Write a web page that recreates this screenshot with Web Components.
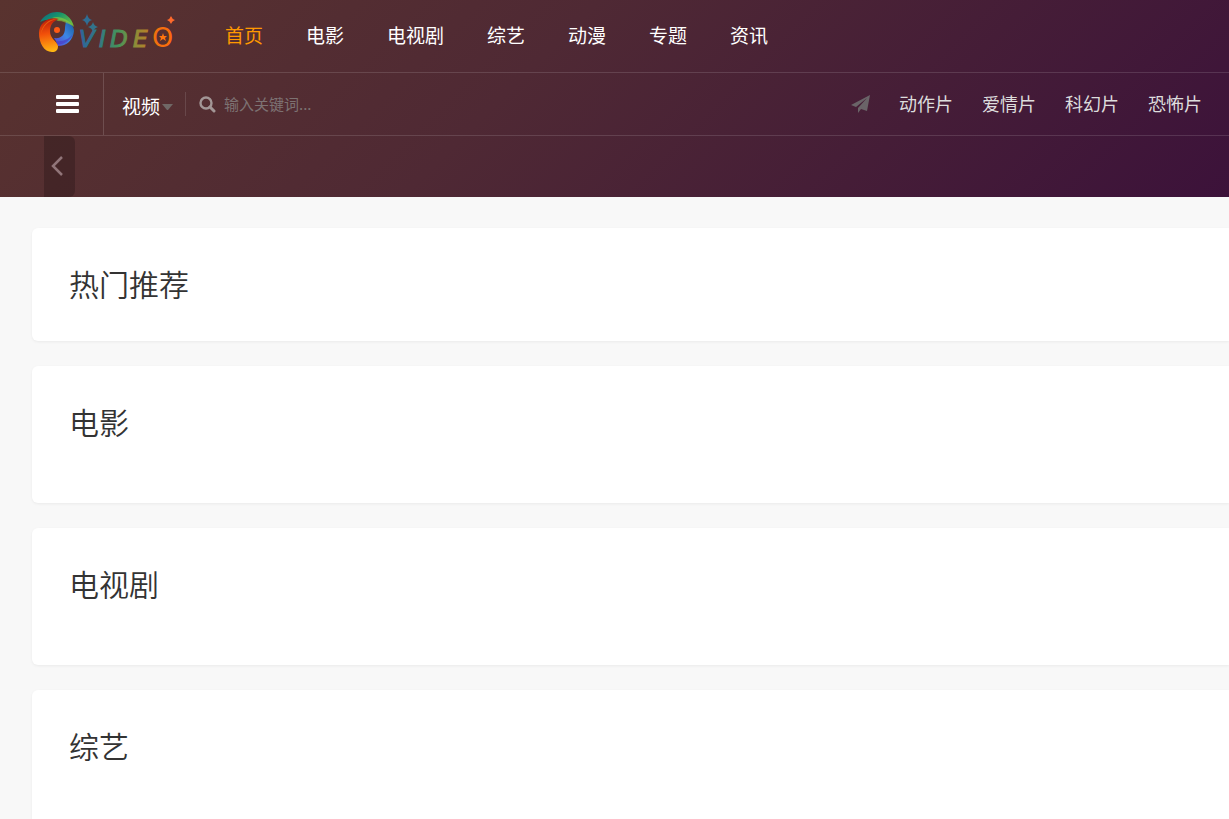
<!DOCTYPE html>
<html lang="zh-CN">
<head>
<meta charset="utf-8">
<meta name="viewport" content="width=device-width, initial-scale=1">
<title>VIDEO</title>
<style>
  html { background: #f8f8f8; }
  body { margin: 0; overflow-x: hidden; color: #333; font: 18px/28px "Noto Sans CJK SC", "Microsoft YaHei", sans-serif; }
</style>
</head>
<body>
<video-app></video-app>

<template id="t-app">
  <style>
    :host { display: block; }
    header { background: linear-gradient(135deg, #59332f 0%, #4f2934 42%, #3c123a 100%); }
    .top { display: flex; align-items: center; height: 72px; padding-left: 38px; border-bottom: 1px solid rgba(255,255,255,.13); }
    main { display: flex; flex-direction: column; gap: 25px; padding: 31px 0 31px 32px; }
  </style>
  <header>
    <div class="top"><site-logo></site-logo><main-nav></main-nav></div>
    <tool-bar></tool-bar>
    <slide-strip></slide-strip>
  </header>
  <main>
    <section-card compact>热门推荐</section-card>
    <section-card>电影</section-card>
    <section-card>电视剧</section-card>
    <section-card>综艺</section-card>
  </main>
</template>

<template id="t-logo">
  <style>
    :host { display: block; flex: none; }
    a { display: block; margin-bottom: 6px; }
    svg { display: block; }
    text { font-family: "DejaVu Sans", sans-serif; font-style: italic; font-size: 23px; stroke-width: 1; }
    .o { font-size: 27px; font-style: normal; stroke-width: 0; }
  </style>
  <a href="#" aria-label="VIDEO">
    <svg width="140" height="44" viewBox="0 0 140 44">
      <defs>
        <linearGradient id="word" gradientUnits="userSpaceOnUse" x1="42" y1="0" x2="138" y2="0">
          <stop offset="0" stop-color="#2d659b"/><stop offset=".22" stop-color="#347c80"/>
          <stop offset=".4" stop-color="#46935a"/><stop offset=".55" stop-color="#84903c"/>
          <stop offset=".7" stop-color="#b57f28"/><stop offset=".78" stop-color="#f0700f"/><stop offset="1" stop-color="#ff6a0c"/>
        </linearGradient>
        <linearGradient id="warm" x1=".4" y1="0" x2=".5" y2="1">
          <stop offset="0" stop-color="#b81a0a"/><stop offset=".45" stop-color="#f2500a"/><stop offset="1" stop-color="#ffb813"/>
        </linearGradient>
        <linearGradient id="cool" x1="0" y1="1" x2="1" y2="0">
          <stop offset="0" stop-color="#5b3fd0"/><stop offset=".5" stop-color="#3c86e4"/><stop offset="1" stop-color="#145a96"/>
        </linearGradient>
        <linearGradient id="leaf" x1="0" y1="0" x2="1" y2=".6">
          <stop offset="0" stop-color="#0c5f88"/><stop offset=".5" stop-color="#17956a"/><stop offset="1" stop-color="#6bb943"/>
        </linearGradient>
      </defs>
      <path d="M28 9C33 12 36 16 36 20C35 29 29 35 20 35C19 32 18 30 16 27C23 28 27 24 27 17C27 14 28 12 28 9Z" fill="url(#cool)"/>
      <path d="M35 23C31 28 25 31 18 30L19 33C26 34 32 30 35 23Z" fill="#4a3fc4" opacity=".7"/>
      <path d="M2 11C6 4 13 1 19 1C27 1 34 7 36 16C31 11 26 9 21 9C14 8 7 8 2 11Z" fill="url(#leaf)"/>
      <path d="M14 7C21 4 30 8 35 15C29 12 25 10 20 10Z" fill="#8fce3d" opacity=".6"/>
      <path d="M21 8C11 5 1 12 1 22C1 32 6 41 14 41C18 41 20 39 20 35C19 30 12 28 12 20C12 14 15 10 21 8Z" fill="url(#warm)"/>
      <path d="M19 8C10 8 4 14 3 23C5 15 10 10 19 8Z" fill="#ff8b14" opacity=".5"/>
      <circle cx="19" cy="19" r="3" fill="#ff5a14"/>
      <path d="M49 3Q50 8 54 9Q50 10 49 15Q48 10 44 9Q48 8 49 3Z" fill="#2f6d94"/>
      <path d="M55 11Q56 15 60 16Q56 17 55 21Q54 17 50 16Q54 15 55 11Z" fill="#32738b"/>
      <text y="36" x="41 61 72 95 114" fill="url(#word)" stroke="url(#word)">VIDE<tspan class="o">O</tspan></text>
      <path d="M125 22L126 25L129 25L127 27L128 30L125 28L122 30L123 27L121 25L124 25Z" fill="#ff760f"/>
      <path d="M133 5Q134 8 137 9Q134 10 133 13Q132 10 129 9Q132 8 133 5Z" fill="#ff6a2c"/>
    </svg>
  </a>
</template>

<template id="t-nav">
  <style>
    :host { display: block; margin-left: 47px; padding-bottom: 2px; }
    nav { display: flex; gap: 43px; white-space: nowrap; }
    a { color: #fff; font-size: 19px; line-height: 28px; text-decoration: none; }
    a[aria-current] { color: #ff9900; }
  </style>
  <nav>
    <a href="#" aria-current="page">首页</a><a href="#">电影</a><a href="#">电视剧</a><a href="#">综艺</a><a href="#">动漫</a><a href="#">专题</a><a href="#">资讯</a>
  </nav>
</template>

<template id="t-tools">
  <style>
    :host { display: flex; align-items: center; height: 62px; border-bottom: 1px solid rgba(255,255,255,.13); }
    button, select, input { margin: 0; padding: 0; border: 0; background: none; font-family: inherit; outline: 0; }
    svg { display: block; }
    .menu { display: flex; align-items: center; justify-content: flex-end; box-sizing: border-box; width: 104px; height: 62px; padding-right: 24px; border-right: 1px solid rgba(255,255,255,.15); }
    form { display: flex; align-items: center; flex: 1; min-width: 0; }
    .kind { display: grid; align-items: center; margin-left: 18px; padding-right: 12px; border-right: 1px solid rgba(255,255,255,.12); height: 24px; }
    .kind > * { grid-area: 1 / 1; }
    .kind svg { justify-self: end; pointer-events: none; }
    select { appearance: none; box-sizing: border-box; width: 51px; color: #fff; font-size: 19px; line-height: 28px; height: 30px; padding-bottom: 2px; }
    option { color: #333; }
    .go { margin: 0 8px 0 13px; }
    input { flex: 1; min-width: 0; color: #ccc; font-size: 15px; line-height: 24px; height: 24px; }
    input::placeholder { color: #7d7272; opacity: 1; }
    nav { display: flex; align-items: center; gap: 29px; padding-right: 27px; white-space: nowrap; }
    a { color: #ddd; font-size: 18px; line-height: 28px; padding-bottom: 2px; text-decoration: none; }
  </style>
  <button class="menu" aria-label="菜单">
    <svg width="23" height="19" fill="#fff"><rect width="23" height="4" rx="1"/><rect y="7" width="23" height="4" rx="1"/><rect y="14" width="23" height="4" rx="1"/></svg>
  </button>
  <form onsubmit="return false">
    <span class="kind">
      <select aria-label="类型"><option>视频</option></select>
      <svg width="11" height="6"><path d="M0 0H11L6 6H5Z" fill="#706866"/></svg>
    </span>
    <button class="go" aria-label="搜索">
      <svg width="17" height="17" viewBox="0 0 17 17" fill="none" stroke="#a39696"><circle cx="7" cy="7" r="5.5" stroke-width="2.4"/><path d="M11 11L15 15" stroke-width="3" stroke-linecap="round"/></svg>
    </button>
    <input type="text" aria-label="关键词" placeholder="输入关键词...">
  </form>
  <nav>
    <svg width="19" height="18" viewBox="0 0 19 18" fill="#6a6468"><path d="M19 0L0 10L5 12L16 3L7 13V18L10 14L16 16Z"/></svg>
    <a href="#">动作片</a><a href="#">爱情片</a><a href="#">科幻片</a><a href="#">恐怖片</a>
  </nav>
</template>

<template id="t-strip">
  <style>
    :host { display: flex; height: 61px; padding-left: 44px; }
    button { display: flex; align-items: center; width: 31px; margin: 0; padding: 0 0 2px 7px; border: 0; border-radius: 0 6px 6px 0; background: rgba(0,0,0,.2); }
  </style>
  <button aria-label="上一张"><svg width="12" height="20" fill="none" stroke="#917579" stroke-width="2.5"><path d="M11 1L2 10L11 19"/></svg></button>
</template>

<template id="t-card">
  <style>
    :host { display: block; box-sizing: border-box; min-height: 137px; padding: 33px 37px; border-radius: 6px 0 0 6px; background: #fff; box-shadow: 0 1px 3px rgba(0,0,0,.06); }
    :host([compact]) { min-height: 113px; }
    h2 { margin: 0; font-size: 30px; line-height: 44px; font-weight: 350; color: #333; }
  </style>
  <h2><slot></slot></h2>
</template>

<script>
  const define = (name, templateId) => customElements.define(name, class extends HTMLElement {
    constructor() {
      super();
      this.attachShadow({ mode: 'open' }).append(document.getElementById(templateId).content.cloneNode(true));
    }
  });
  define('site-logo', 't-logo');
  define('main-nav', 't-nav');
  define('tool-bar', 't-tools');
  define('slide-strip', 't-strip');
  define('section-card', 't-card');
  define('video-app', 't-app');
</script>
</body>
</html>
